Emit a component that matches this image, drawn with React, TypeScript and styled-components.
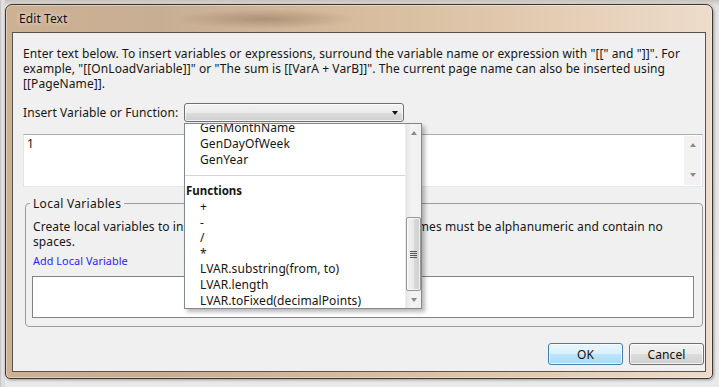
import styled, { createGlobalStyle } from "styled-components";

const GlobalStyle = createGlobalStyle`
  html, body {
    margin: 0;
    padding: 0;
  }
  body {
    font-family: "Noto Sans", "DejaVu Sans", sans-serif;
    font-size: 12px;
    letter-spacing: 0.09px;
    color: #161616;
    background: #dcdcdc;
  }
`;

const Desktop = styled.div`
  width: 719px;
  height: 387px;
  box-sizing: border-box;
  overflow: hidden;
  padding: 4px 0 0 5px;
  background:
    linear-gradient(90deg, #bdbdbd 0, #e6e6e6 2px, #d8d8d8 5px, transparent 5px),
    linear-gradient(#c9c2ba 0, #e3e3e3 6px, #e9e9e9 100%);
`;

const Window = styled.div`
  width: 708px;
  height: 375px;
  box-sizing: border-box;
  border: 1px solid #3b3733;
  border-radius: 7px 7px 5px 5px;
  padding: 0 6px 6px 6px;
  display: flex;
  flex-direction: column;
  background:
    radial-gradient(ellipse 90px 10px at 260px 14px, rgba(110, 80, 60, 0.35), transparent),
    linear-gradient(90deg, #cdb193 0%, #c8ae93 22%, #d7bc9d 50%, #e3cbb1 75%, #eddccb 100%);
  box-shadow: inset 0 0 0 1px rgba(255, 255, 255, 0.35), 1px 1px 3px rgba(0, 0, 0, 0.35);
`;

const TitleBar = styled.div`
  height: 27px;
  display: flex;
  align-items: center;
  padding-left: 7px;
  font-size: 12px;
  color: #111;
  text-shadow: 0 0 5px rgba(255, 255, 255, 0.9);
`;

const Client = styled.div`
  position: relative;
  flex: 1;
  border: 1px solid #57524c;
  background: #f0f0f0;
  padding: 13px 1px 0 10px;
  display: flex;
  flex-direction: column;
`;

const Intro = styled.p`
  margin: 0;
  line-height: 15px;
  white-space: nowrap;
`;

const InsertRow = styled.div`
  display: flex;
  align-items: center;
  margin-top: 12px;
  height: 19px;
`;

const Label = styled.span`
  width: 161px;
  white-space: nowrap;
`;

const Select = styled.div`
  width: 220px;
  height: 19px;
  box-sizing: border-box;
  border: 1px solid #707070;
  border-radius: 3px;
  background: linear-gradient(#f3f3f3 0%, #ebebeb 50%, #dddddd 51%, #cfcfcf 100%);
  box-shadow: inset 0 0 0 1px rgba(255, 255, 255, 0.7);
  display: flex;
  align-items: center;
  justify-content: flex-end;
  padding-right: 5px;
`;

const Caret = styled.span`
  width: 0;
  height: 0;
  border-left: 3.5px solid transparent;
  border-right: 3.5px solid transparent;
  border-top: 4px solid #111;
`;

const TextBox = styled.div`
  margin-top: 12px;
  width: 680px;
  height: 53px;
  box-sizing: border-box;
  border: 1px solid #abadb3;
  border-color: #abadb3 #dbdfe6 #e3e9ef #e2e3ea;
  background: #fff;
  display: flex;
`;

const TextValue = styled.div`
  flex: 1;
  padding: 1px 3px;
  line-height: 15px;
`;

const Gutter = styled.div`
  width: 17px;
  margin: 1px;
  background: #f2f2f2;
  display: flex;
  flex-direction: column;
  justify-content: space-between;
  align-items: center;
  padding: 7px 0 8px;
`;

const Arrow = styled.span<{ $down?: boolean }>`
  width: 0;
  height: 0;
  border-left: 3.5px solid transparent;
  border-right: 3.5px solid transparent;
  ${(p) => (p.$down ? "border-top: 4px solid #8a8a8a;" : "border-bottom: 4px solid #8a8a8a;")}
`;

const Group = styled.fieldset`
  margin: 9px 0 0 2px;
  padding: 8px 8px 8px 7px;
  width: 677px;
  height: 131px;
  box-sizing: border-box;
  border: 1px solid #9c9c9c;
  border-radius: 4px;
`;

const Legend = styled.legend`
  margin-left: -3px;
  padding: 0 3px;
  font-size: 12px;
  line-height: 15px;
  letter-spacing: 0.3px;
`;

const GroupText = styled.p`
  margin: 0;
  line-height: 15px;
  white-space: nowrap;
`;

const AddLink = styled.a`
  display: block;
  margin-top: 5px;
  font-size: 10.8px;
  line-height: 14px;
  color: #1f1fff;
  cursor: pointer;
`;

const VarBox = styled.div`
  margin: 8px 0 0 -1px;
  width: 662px;
  height: 42px;
  box-sizing: border-box;
  border: 1px solid #828282;
  background: #fff;
`;

const ButtonRow = styled.div`
  display: flex;
  justify-content: flex-end;
  gap: 6px;
  margin-top: 16px;
`;

const Button = styled.button<{ $default?: boolean }>`
  width: 75px;
  height: 22px;
  font-family: inherit;
  font-size: 12px;
  letter-spacing: inherit;
  color: #111;
  border-radius: 3px;
  padding: 0;
  border: 1px solid ${(p) => (p.$default ? "#3c7fb1" : "#707070")};
  background: ${(p) =>
    p.$default
      ? "linear-gradient(#eaf6fd 0%, #d9f0fc 50%, #bee6fd 51%, #a7d9f5 100%)"
      : "linear-gradient(#f2f2f2 0%, #ebebeb 50%, #dddddd 51%, #cfcfcf 100%)"};
  box-shadow: inset 0 0 0 1px rgba(255, 255, 255, 0.75);
`;

const DropList = styled.div`
  position: absolute;
  left: 171px;
  top: 90px;
  width: 238px;
  height: 186px;
  box-sizing: border-box;
  border: 1px solid #828790;
  background: #fff;
  box-shadow: 3px 3px 4px rgba(0, 0, 0, 0.28);
  display: flex;
  z-index: 2;
`;

const ListBody = styled.div`
  flex: 1;
  overflow: hidden;
`;

const ListInner = styled.div`
  margin-top: -4px;
`;

const Item = styled.div<{ $h?: number }>`
  padding-left: 15px;
  height: ${(p) => p.$h ?? 16}px;
  line-height: ${(p) => p.$h ?? 16}px;
  white-space: nowrap;
  font-size: 12px;
`;

const Separator = styled.div`
  margin: 7px 0 7px;
  border-top: 1px solid #d4d4d4;
`;

const GroupHead = styled.div`
  padding-left: 1px;
  height: 16px;
  line-height: 16px;
  font-weight: bold;
  font-size: 11.5px;
  letter-spacing: 0;
`;

const ScrollBar = styled.div`
  width: 15px;
  background: linear-gradient(90deg, #e6e6e6, #f4f4f4 40%, #f0f0f0);
  display: flex;
  flex-direction: column;
  border-left: 1px solid #ececec;
`;

const ScrollButton = styled.div`
  height: 17px;
  display: flex;
  align-items: center;
  justify-content: center;
`;

const Track = styled.div`
  flex: 1;
`;

const Thumb = styled.div`
  margin: 76px 0 0 0;
  height: 74px;
  box-sizing: border-box;
  border: 1px solid #969696;
  border-radius: 2px;
  background: linear-gradient(90deg, #f2f2f2, #e8e8e8 50%, #d9d9d9 51%, #cfcfcf);
  box-shadow: inset 0 0 0 1px rgba(255, 255, 255, 0.7);
  display: flex;
  flex-direction: column;
  align-items: center;
  justify-content: center;
  gap: 1px;
`;

const Grip = styled.span`
  width: 7px;
  height: 1px;
  background: #555;
`;

const App = () => {
  return (
    <>
      <GlobalStyle />
      <Desktop>
        <Window>
          <TitleBar>Edit Text</TitleBar>
          <Client>
            <Intro>
              Enter text below. To insert variables or expressions, surround the variable name or expression with "[[" and "]]". For
              <br />
              example, "[[OnLoadVariable]]" or "The sum is [[VarA + VarB]]". The current page name can also be inserted using
              <br />
              [[PageName]].
            </Intro>
            <InsertRow>
              <Label>Insert Variable or Function:</Label>
              <Select>
                <Caret />
              </Select>
            </InsertRow>
            <TextBox>
              <TextValue>1</TextValue>
              <Gutter>
                <Arrow />
                <Arrow $down />
              </Gutter>
            </TextBox>
            <Group>
              <Legend>Local Variables</Legend>
              <GroupText>
                Create local variables to insert into the text below. Local variable names must be alphanumeric and contain no
                <br />
                spaces.
              </GroupText>
              <AddLink>Add Local Variable</AddLink>
              <VarBox />
            </Group>
            <ButtonRow>
              <Button $default>OK</Button>
              <Button>Cancel</Button>
            </ButtonRow>

            <DropList>
              <ListBody>
                <ListInner>
                  <Item>GenMonthName</Item>
                  <Item>GenDayOfWeek</Item>
                  <Item>GenYear</Item>
                  <Separator />
                  <GroupHead>Functions</GroupHead>
                  <Item $h={15.6}>+</Item>
                  <Item $h={15.6}>-</Item>
                  <Item $h={15.6}>/</Item>
                  <Item $h={15.6}>*</Item>
                  <Item $h={15.6}>LVAR.substring(from, to)</Item>
                  <Item $h={15.6}>LVAR.length</Item>
                  <Item $h={15.6}>LVAR.toFixed(decimalPoints)</Item>
                </ListInner>
              </ListBody>
              <ScrollBar>
                <ScrollButton>
                  <Arrow />
                </ScrollButton>
                <Track>
                  <Thumb>
                    <Grip />
                    <Grip />
                    <Grip />
                    <Grip />
                  </Thumb>
                </Track>
                <ScrollButton>
                  <Arrow $down />
                </ScrollButton>
              </ScrollBar>
            </DropList>
          </Client>
        </Window>
      </Desktop>
    </>
  );
};

export default App;
